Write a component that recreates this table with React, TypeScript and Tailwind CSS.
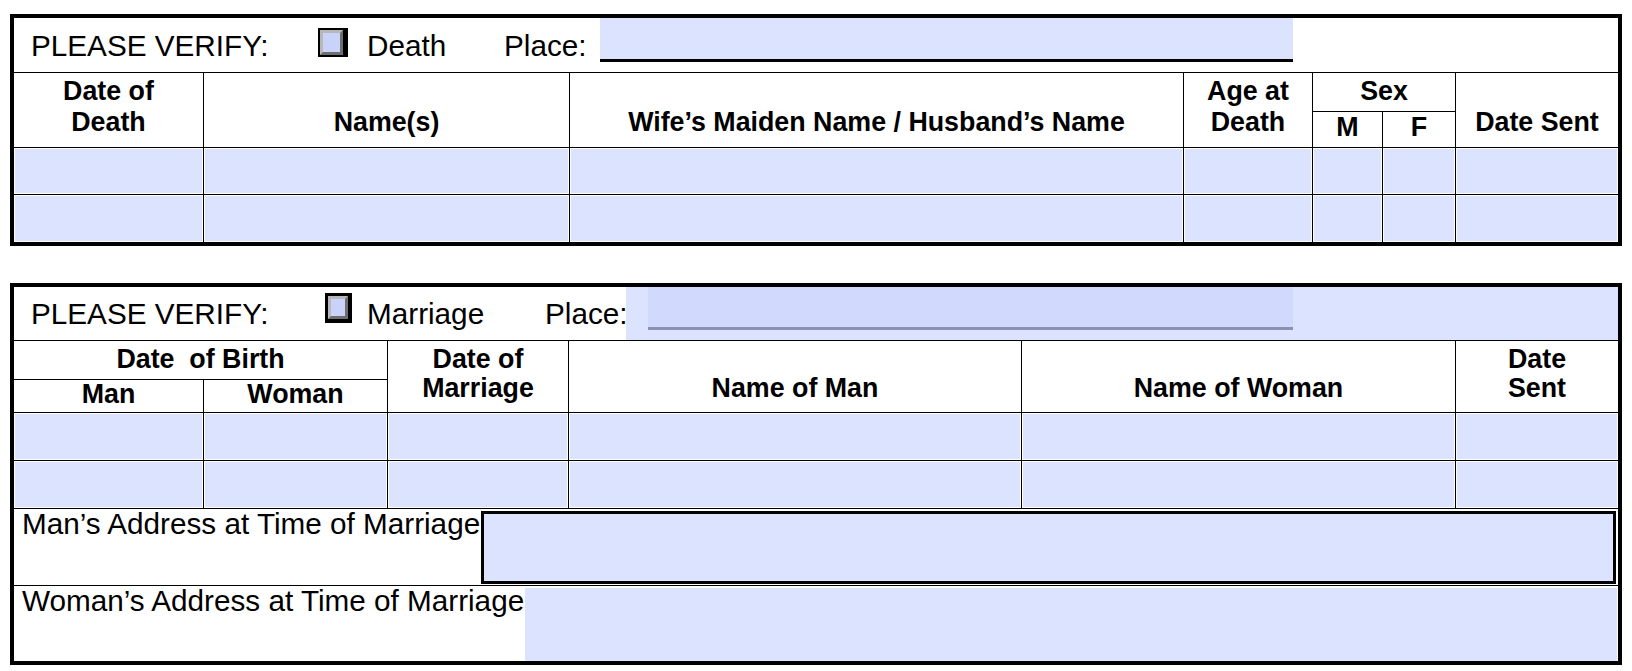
import React from "react";

const font = "font-['Liberation_Sans',Arial,sans-serif]";

const deathCols = "grid grid-cols-[190px_366px_614px_129px_70px_73px_162px]";
const marriageCols = "grid grid-cols-[190px_184px_181px_453px_434px_162px]";

function Checkbox({ className }: { className: string }) {
  return (
    <div className={`shrink-0 border-black ${className}`}>
      <div className="h-full w-full border-[3px] border-t-[#b8b8b8] border-l-[#b8b8b8] border-b-[#6e6e6e] border-r-[#6e6e6e] bg-[#c9d3fa]" />
    </div>
  );
}

function FieldCell({ last }: { last?: boolean }) {
  return (
    <div className={`p-px ${last ? "" : "border-r border-black"}`}>
      <div className="h-full w-full bg-[#dce3fe]" />
    </div>
  );
}

function FieldRow({ cols, count, className }: { cols: string; count: number; className: string }) {
  return (
    <div className={`${cols} ${className}`}>
      {Array.from({ length: count }).map((_, i) => (
        <FieldCell key={i} last={i === count - 1} />
      ))}
    </div>
  );
}

function DeathSection() {
  return (
    <section className="w-[1612px] border-4 border-black">
      <div className="flex h-[55px] items-center border-b border-black text-[29.7px] leading-[33px]">
        <div className="w-[304px] pl-[17px]">PLEASE VERIFY:</div>
        <Checkbox className="mt-[10px] h-[29px] w-[30px] self-start border-2 border-r-[5px]" />
        <div className="w-[156px] pl-[19px]">Death</div>
        <div className="w-[96px]">Place:</div>
        <div className="h-[44px] w-[693px] self-start border-b-[3px] border-black bg-[#dce3fe]" />
      </div>

      <div className={`${deathCols} h-[75px] border-b border-black text-center text-[26.8px] font-bold leading-[31px]`}>
        <div className="border-r border-black pt-[3px]">
          Date of
          <br />
          Death
        </div>
        <div className="border-r border-black pt-[34px]">Name(s)</div>
        <div className="border-r border-black pt-[34px]">Wife’s Maiden Name / Husband’s Name</div>
        <div className="border-r border-black pt-[3px]">
          Age at
          <br />
          Death
        </div>
        <div className="col-span-2 flex flex-col border-r border-black">
          <div className="h-[39px] border-b border-black pt-[3px]">Sex</div>
          <div className="grid flex-1 grid-cols-[70px_72px]">
            <div className="border-r border-black">M</div>
            <div>F</div>
          </div>
        </div>
        <div className="pt-[34px]">Date Sent</div>
      </div>

      <FieldRow cols={deathCols} count={7} className="h-[47px] border-b border-black" />
      <FieldRow cols={deathCols} count={7} className="h-[47px]" />
    </section>
  );
}

function MarriageSection() {
  return (
    <section className="mt-[37px] w-[1612px] border-4 border-black">
      <div className="flex h-[54px] items-center border-b border-black text-[29.7px] leading-[33px]">
        <div className="w-[311px] pl-[17px]">PLEASE VERIFY:</div>
        <Checkbox className="mt-[6px] h-[30px] w-[27px] self-start border-[3px] border-b-4 border-r-4" />
        <div className="w-[193px] pl-[15px]">Marriage</div>
        <div className="w-[81px]">Place:</div>
        <div className="h-full flex-1 bg-[#dce3fe]">
          <div className="ml-[22px] h-[43px] w-[645px] border-b-[3px] border-[#8a91b3] bg-[#d1dafc]" />
        </div>
      </div>

      <div className={`${marriageCols} h-[72px] border-b border-black text-center text-[26.8px] font-bold leading-[29px]`}>
        <div className="col-span-2 flex flex-col border-r border-black">
          <div className="h-[39px] border-b border-black pt-[4px] whitespace-pre">Date  of Birth</div>
          <div className="grid flex-1 grid-cols-[190px_183px]">
            <div className="border-r border-black">Man</div>
            <div>Woman</div>
          </div>
        </div>
        <div className="border-r border-black pt-[4px]">
          Date of
          <br />
          Marriage
        </div>
        <div className="border-r border-black pt-[33px]">Name of Man</div>
        <div className="border-r border-black pt-[33px]">Name of Woman</div>
        <div className="pt-[4px]">
          Date
          <br />
          Sent
        </div>
      </div>

      <FieldRow cols={marriageCols} count={6} className="h-[48px] border-b border-black" />
      <FieldRow cols={marriageCols} count={6} className="h-[48px] border-b border-black" />

      <div className="flex h-[77px] border-b border-black text-[29.7px] leading-[29px]">
        <div className="w-[467px] shrink-0 pl-[8px] whitespace-nowrap">Man’s Address at Time of Marriage</div>
        <div className="mr-[2px] mt-[2px] h-[73px] flex-1 border-[3px] border-black bg-[#dce3fe]" />
      </div>
      <div className="flex h-[75px] text-[29.7px] leading-[29px]">
        <div className="w-[511px] shrink-0 pl-[8px] whitespace-nowrap">Woman’s Address at Time of Marriage</div>
        <div className="mr-px mt-[2px] h-[73px] flex-1 bg-[#dce3fe]" />
      </div>
    </section>
  );
}

export default function App() {
  return (
    <div className={`${font} h-[671px] w-[1632px] bg-white pl-[10px] pt-[14px] text-black`}>
      <DeathSection />
      <MarriageSection />
    </div>
  );
}
